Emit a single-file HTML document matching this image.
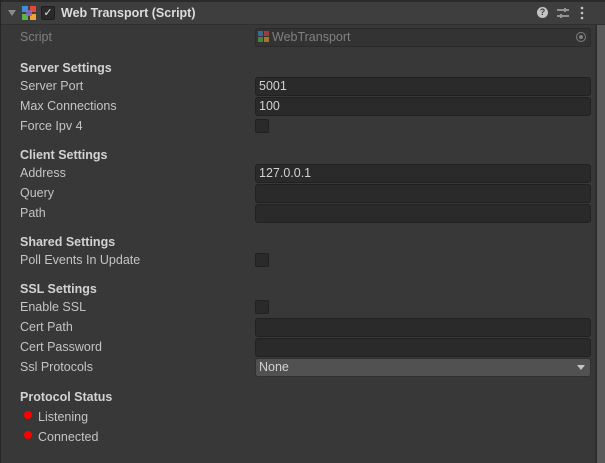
<!DOCTYPE html><html><head><style>
body{margin:0;width:605px;height:463px;background:#383838;overflow:hidden;font-family:"Liberation Sans",sans-serif;font-size:12.5px;color:#c4c4c4;position:relative}
.a{position:absolute}
.l{position:absolute;left:20px;line-height:14px}
.h{font-weight:bold;color:#d2d2d2}
.f{position:absolute;left:255px;height:17px;background:#2a2a2a;border:1px solid #212121;border-radius:3px;line-height:17px;padding-left:3px;width:331px;color:#d2d2d2}
.c{position:absolute;left:255px;width:12px;height:12px;background:#2a2a2a;border:1px solid #212121;border-radius:2px}
.d{position:absolute;left:24px;width:8px;height:8px;border-radius:50%;background:#f00}
</style></head><body>
<div class="a" style="left:0;top:0;width:605px;height:2px;background:#2a2a2a"></div>
<div class="a" style="left:0;top:2px;width:605px;height:22px;background:#3e3e3e;border-bottom:1px solid #2f2f2f"></div>
<div class="a" style="left:0;top:0;width:1px;height:463px;background:#252525"></div>
<div class="a" style="left:597px;top:25px;width:8px;height:438px;background:#5a5a5a"></div>
<div class="a" style="left:595px;top:25px;width:2px;height:438px;background:#2e2e2e"></div>
<div class="a" style="left:8px;top:10px;width:0;height:0;border-left:4px solid transparent;border-right:4px solid transparent;border-top:6px solid #8a8a8a"></div>
<svg class="a" style="left:21px;top:5px" width="16" height="16" viewBox="0 0 16 16"><rect x="1" y="1" width="6" height="6" fill="#3b8fd6"/><rect x="9" y="1" width="6" height="6" fill="#e2473b"/><rect x="1" y="9" width="6" height="6" fill="#59b54a"/><rect x="9" y="9" width="6" height="6" fill="#f2a431"/><rect x="5" y="5" width="6" height="6" fill="#8a6ad0" opacity=".8"/></svg>
<div class="a" style="left:41px;top:6px;width:12px;height:12px;background:#2a2a2a;border:1px solid #1e1e1e;border-radius:2px;color:#e0e0e0;font-size:11px;line-height:12px;text-align:center">✓</div>
<div class="a h" style="left:61px;top:6px;font-size:12.5px;line-height:14px;color:#dcdcdc">Web Transport (Script)</div>
<div class="a" style="left:537px;top:7px;width:11px;height:11px;border-radius:50%;background:#c4c4c4;color:#3e3e3e;font-size:9px;font-weight:bold;line-height:11px;text-align:center">?</div>
<svg class="a" style="left:557px;top:7px" width="12" height="12"><path d="M0 3h7M9 3h3M8 1v4M0 9h3M5 9h7M4 7v4" stroke="#c4c4c4" stroke-width="1.3"/></svg>
<svg class="a" style="left:579px;top:6px" width="6" height="14"><circle cx="3" cy="2" r="1.3" fill="#c4c4c4"/><circle cx="3" cy="7" r="1.3" fill="#c4c4c4"/><circle cx="3" cy="12" r="1.3" fill="#c4c4c4"/></svg>
<div class="l" style="top:30px;color:#7f7f7f">Script</div>
<div class="f" style="top:28px;background:#333;border-color:#2a2a2a;color:#808080;padding-left:16px;width:318px">WebTransport</div>
<svg class="a" style="left:258px;top:31px" width="12" height="12"><rect x="0" y="0" width="5" height="5" fill="#3b8fd6" opacity=".6"/><rect x="6" y="0" width="5" height="5" fill="#e2473b" opacity=".6"/><rect x="0" y="6" width="5" height="5" fill="#59b54a" opacity=".6"/><rect x="6" y="6" width="5" height="5" fill="#f2a431" opacity=".6"/></svg>
<div class="a" style="left:576px;top:32px;width:8px;height:8px;border:1px solid #808080;border-radius:50%"></div>
<div class="a" style="left:579px;top:35px;width:4px;height:4px;border-radius:50%;background:#808080"></div>
<div class="l h" style="top:61px">Server Settings</div>
<div class="l" style="top:79px">Server Port</div><div class="f" style="top:77px">5001</div>
<div class="l" style="top:99px">Max Connections</div><div class="f" style="top:97px">100</div>
<div class="l" style="top:119px">Force Ipv 4</div><div class="c" style="top:119px"></div>
<div class="l h" style="top:148px">Client Settings</div>
<div class="l" style="top:166px">Address</div><div class="f" style="top:164px">127.0.0.1</div>
<div class="l" style="top:186px">Query</div><div class="f" style="top:184px"></div>
<div class="l" style="top:206px">Path</div><div class="f" style="top:204px"></div>
<div class="l h" style="top:235px">Shared Settings</div>
<div class="l" style="top:253px">Poll Events In Update</div><div class="c" style="top:253px"></div>
<div class="l h" style="top:282px">SSL Settings</div>
<div class="l" style="top:300px">Enable SSL</div><div class="c" style="top:300px"></div>
<div class="l" style="top:320px">Cert Path</div><div class="f" style="top:318px"></div>
<div class="l" style="top:340px">Cert Password</div><div class="f" style="top:338px"></div>
<div class="l" style="top:360px">Ssl Protocols</div><div class="f" style="top:358px;background:#515151;border-color:#303030">None</div>
<div class="a" style="left:577px;top:365px;border-left:4px solid transparent;border-right:4px solid transparent;border-top:5px solid #c4c4c4"></div>
<div class="l h" style="top:390px">Protocol Status</div>
<div class="d" style="top:411px"></div><div class="l" style="left:38px;top:410px">Listening</div>
<div class="d" style="top:431px"></div><div class="l" style="left:38px;top:430px">Connected</div>
</body></html>
